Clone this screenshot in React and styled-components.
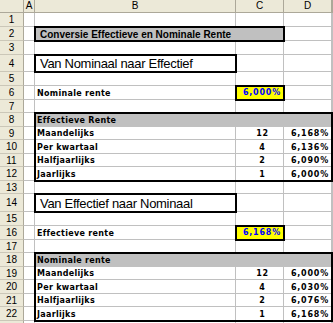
import React from 'react'
import styled, { createGlobalStyle } from 'styled-components'

const GlobalStyle = createGlobalStyle`
  html, body {
    margin: 0;
    padding: 0;
    background: #fff;
    overflow: hidden;
  }
`

// sheet rows 1..23, header row is separate
const rowHeights = [14, 14, 14, 17, 14, 14, 13, 14, 13, 14, 13, 14, 13, 18, 14, 14, 13, 14, 13, 14, 13, 14, 20]
const columns = ['A', 'B', 'C', 'D', '']

const Sheet = styled.div`
  display: grid;
  grid-template-columns: 24px 11px 201px 48px 48px 1fr;
  grid-template-rows: 13px ${rowHeights.map(h => h + 'px').join(' ')};
  width: 333px;
  height: 323px;
  overflow: hidden;
  font-family: "Liberation Sans", Arial, sans-serif;
  color: #000;
`

const Corner = styled.div`
  grid-column: 1;
  grid-row: 1;
  background: #ece9d8;
  border-right: 1px solid #aca899;
  border-bottom: 1px solid #aca899;
`

const ColHead = styled.div`
  grid-column: ${p => p.$c};
  grid-row: 1;
  background: #ece9d8;
  border-right: 1px solid #aca899;
  border-bottom: 1px solid #aca899;
  font-size: 10px;
  line-height: 12px;
  text-align: center;
`

const RowHead = styled.div`
  grid-column: 1;
  grid-row: ${p => p.$r};
  background: #ece9d8;
  border-right: 1px solid #aca899;
  border-bottom: 1px solid #cbc7b8;
  font-size: 10px;
  display: flex;
  align-items: center;
  justify-content: center;
`

const Cell = styled.div`
  grid-column: ${p => p.$c};
  grid-row: ${p => p.$r};
  border-right: 1px solid #c0c0c0;
  border-bottom: 1px solid #c0c0c0;
`

const Box = styled.div`
  grid-column: ${p => p.$c};
  grid-row: ${p => p.$r};
  margin: -1px;
  border: 2px solid #000;
  background: ${p => p.$fill || 'transparent'};
  display: flex;
  align-items: center;
  justify-content: ${p => (p.$right ? 'flex-end' : 'flex-start')};
  padding: 0 ${p => (p.$right ? '2px' : '0')} 0 ${p => (p.$right ? '0' : '4px')};
  overflow: hidden;
  white-space: nowrap;
`

const Title = styled.span`
  font-size: 10px;
  font-weight: bold;
`

const Heading = styled.span`
  font-size: 13px;
  letter-spacing: -0.3px;
`

const Band = styled.div`
  grid-column: 3 / 6;
  grid-row: ${p => p.$r};
  background: #c0c0c0;
  display: flex;
  align-items: flex-end;
  padding: 0 0 2px 2px;
`

const Small = styled.span`
  font-family: "DejaVu Sans", Verdana, sans-serif;
  font-size: 8px;
  font-weight: bold;
  line-height: 8px;
  letter-spacing: 0.3px;
  color: ${p => p.$color || '#000'};
`

const Value = styled.div`
  grid-column: ${p => p.$c};
  grid-row: ${p => p.$r};
  display: flex;
  align-items: flex-end;
  justify-content: ${p => p.$align || 'flex-start'};
  padding: 0 ${p => (p.$align === 'flex-end' ? '3px' : '0')} 2px ${p => (p.$align === 'center' ? '5px' : '2px')};
  white-space: nowrap;
`

const Num = styled(Small)`
  letter-spacing: 0.8px;
`

const Input = ({ row, value }) => (
  <Box $c={4} $r={row + 1} $fill="#ffff00" $right>
    <Num $color="#0000ff">{value}</Num>
  </Box>
)

const RateTable = ({ row, title, rows }) => (
  <>
    <Band $r={row + 1}>
      <Small>{title}</Small>
    </Band>
    {rows.map((r, i) => (
      <React.Fragment key={r[0]}>
        <Value $c={3} $r={row + 2 + i}><Small>{r[0]}</Small></Value>
        <Value $c={4} $r={row + 2 + i} $align="center"><Num>{r[1]}</Num></Value>
        <Value $c={5} $r={row + 2 + i} $align="flex-end"><Num>{r[2]}</Num></Value>
      </React.Fragment>
    ))}
    <Box $c="3 / 6" $r={`${row + 1} / ${row + 6}`} />
  </>
)

const effectief = [
  ['Maandelijks', '12', '6,168%'],
  ['Per kwartaal', '4', '6,136%'],
  ['Halfjaarlijks', '2', '6,090%'],
  ['Jaarlijks', '1', '6,000%'],
]

const nominaal = [
  ['Maandelijks', '12', '6,000%'],
  ['Per kwartaal', '4', '6,030%'],
  ['Halfjaarlijks', '2', '6,076%'],
  ['Jaarlijks', '1', '6,168%'],
]

const App = () => (
  <>
    <GlobalStyle />
    <Sheet>
      <Corner />
      {columns.map((c, i) => (
        <ColHead key={i} $c={i + 2}>{c}</ColHead>
      ))}
      {rowHeights.map((h, r) => (
        <React.Fragment key={r}>
          {/* row 23 only peeks in at the bottom edge */}
          <RowHead $r={r + 2}>{r < 22 ? r + 1 : ''}</RowHead>
          {columns.map((c, i) => (
            <Cell key={i} $c={i + 2} $r={r + 2} />
          ))}
        </React.Fragment>
      ))}

      <Box $c="3 / 5" $r={3} $fill="#c0c0c0">
        <Title>Conversie Effectieve en Nominale Rente</Title>
      </Box>

      <Box $c={3} $r={5} $fill="#fff">
        <Heading>Van Nominaal naar Effectief</Heading>
      </Box>
      <Value $c={3} $r={7}><Small>Nominale rente</Small></Value>
      <Input row={6} value="6,000%" />
      <RateTable row={8} title="Effectieve Rente" rows={effectief} />

      <Box $c={3} $r={15} $fill="#fff">
        <Heading>Van Effectief naar Nominaal</Heading>
      </Box>
      <Value $c={3} $r={17}><Small>Effectieve rente</Small></Value>
      <Input row={16} value="6,168%" />
      <RateTable row={18} title="Nominale rente" rows={nominaal} />
    </Sheet>
  </>
)

export default App
